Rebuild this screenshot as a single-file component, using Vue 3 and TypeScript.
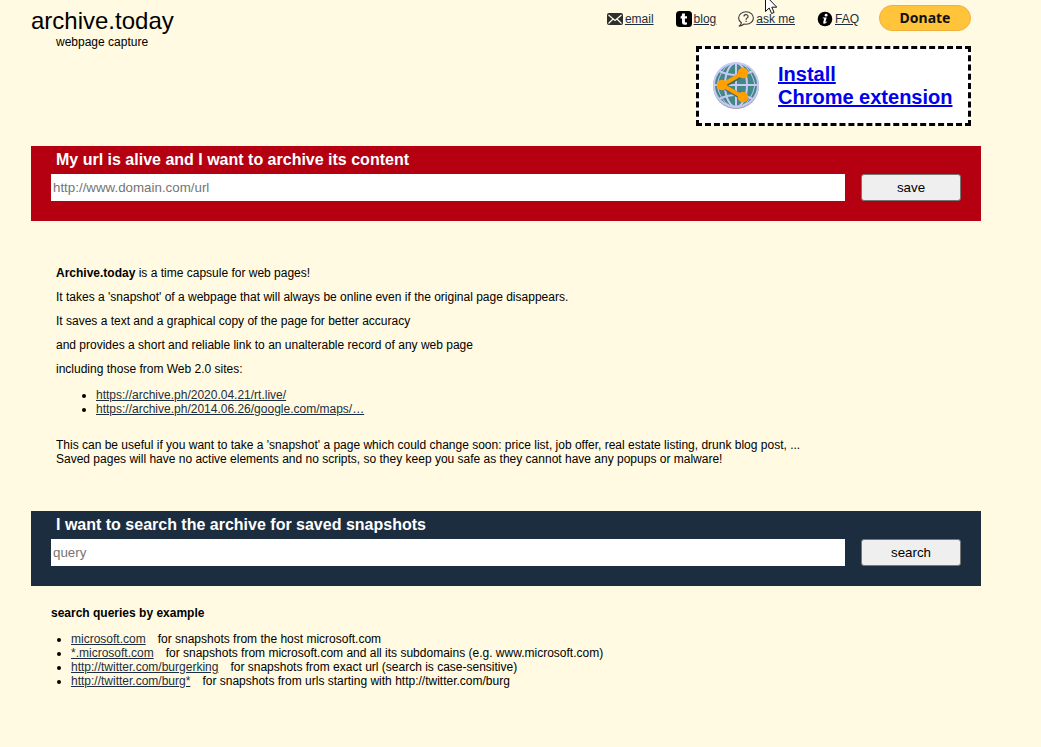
<script setup lang="ts">
import { ref } from 'vue'

interface QueryExample {
  query: string
  description: string
}

const url = ref('')
const query = ref('')

const samples: string[] = [
  'https://archive.ph/2020.04.21/rt.live/',
  'https://archive.ph/2014.06.26/google.com/maps/…',
]

const examples: QueryExample[] = [
  { query: 'microsoft.com', description: 'for snapshots from the host microsoft.com' },
  { query: '*.microsoft.com', description: 'for snapshots from microsoft.com and all its subdomains (e.g. www.microsoft.com)' },
  { query: 'http://twitter.com/burgerking', description: 'for snapshots from exact url (search is case-sensitive)' },
  { query: 'http://twitter.com/burg*', description: 'for snapshots from urls starting with http://twitter.com/burg' },
]
</script>

<template>
  <div class="page">
    <header class="header">
      <div class="brand">
        <h1 class="title">archive.today</h1>
        <div class="tagline">webpage capture</div>
      </div>
      <div class="side">
        <nav class="nav">
          <a class="nav-link" href="#email">
            <svg width="16" height="16" viewBox="0 0 16 16" aria-hidden="true">
              <rect y="2" width="16" height="12" rx="2" fill="#2e2e2e" />
              <path d="M1.5 4 L8 9.5 L14.5 4 M1.5 12.5 L5.8 8.3 M14.5 12.5 L10.2 8.3" fill="none" stroke="#fffae1" stroke-width="1.2" />
            </svg>
            <span class="nav-text">email</span>
          </a>
          <a class="nav-link" href="#blog">
            <svg width="16" height="16" viewBox="0 0 16 16" aria-hidden="true">
              <rect width="16" height="16" rx="3.5" fill="#000" />
              <path d="M6.2 2.4 H8.9 V5.2 H11 V7.4 H8.9 V10.4 Q8.9 11.5 9.9 11.5 Q10.5 11.5 11 11.2 V13.2 Q10.2 13.7 8.9 13.7 Q6 13.7 6 11.2 V7.4 H4.6 V5.6 Q6.1 5 6.2 2.4 Z" fill="#fff" />
            </svg>
            <span class="nav-text">blog</span>
          </a>
          <a class="nav-link" href="#ask">
            <svg width="16" height="16" viewBox="0 0 16 16" aria-hidden="true">
              <path d="M3.4 11.8 C1.2 10.3 .6 8.7 .6 7 C.6 3.5 3.8 .8 8.1 .8 C12.3 .8 15.4 3.5 15.4 7 C15.4 10.6 12.3 13.2 8.1 13.2 L6.1 13 C4.8 14.2 3.2 14.9 .9 15.2 C2.4 14.2 3.1 13.1 3.4 11.8 Z" fill="none" stroke="#3c3c3c" stroke-width="1.1" />
              <path d="M6 5.4 C6 3.2 10.1 3.1 10.1 5.4 C10.1 7 8.1 6.8 8.1 8.7 M8.1 9.7 V11" fill="none" stroke="#3c3c3c" stroke-width="1.2" />
            </svg>
            <span class="nav-text">ask me</span>
          </a>
          <a class="nav-link" href="#faq">
            <svg width="16" height="16" viewBox="0 0 16 16" aria-hidden="true">
              <circle cx="8" cy="8" r="7.3" fill="#000" />
              <circle cx="9.1" cy="4.2" r="1.4" fill="#fff" />
              <path d="M5.8 6.6 H9.7 L8.4 11.1 Q8.5 11.5 9.8 10.4 L10.2 10.8 Q8.5 13 6.9 12.8 Q5.9 12.6 6.3 11.1 L7.2 7.5 L5.7 7.2 Z" fill="#fff" />
            </svg>
            <span class="nav-text">FAQ</span>
          </a>
          <button class="donate" type="button">Donate</button>
        </nav>
        <a class="extension" href="#extension">
          <svg width="48" height="48" viewBox="0 1 48 48" aria-hidden="true">
            <circle cx="24" cy="25" r="23" fill="#999aa8" />
            <circle cx="24" cy="24" r="22" fill="#438887" stroke="#c6c9f4" stroke-width="2" />
            <g fill="none" stroke="#c6c9f4" stroke-width="2">
              <path d="M2 24 H46 M24 2 V46" />
              <ellipse cx="24" cy="24" rx="11" ry="22" />
              <path d="M7 10 Q24 18 41 10 M7 38 Q24 30 41 38" />
              <path d="M18 3 Q8 9 5 24 Q8 39 18 45 M30 3 Q40 9 43 24 Q40 39 30 45" stroke-width="1" />
            </g>
            <path d="M31 13 L11 25 L31 37" fill="none" stroke="#446966" stroke-width="5" />
            <path d="M31 12 L10 24 L31 36" fill="none" stroke="#ffa000" stroke-width="4" />
            <g fill="#ffa000">
              <circle cx="10" cy="24" r="5.3" />
              <circle cx="31" cy="12" r="5.3" />
              <circle cx="31" cy="36" r="5.3" />
            </g>
          </svg>
          <span class="extension-text">Install<br>Chrome extension</span>
        </a>
      </div>
    </header>

    <main>
      <form class="panel save-panel" @submit.prevent>
        <label class="panel-title" for="url">My url is alive and I want to archive its content</label>
        <div class="fields">
          <input id="url" v-model="url" class="text-box" type="text" placeholder="http://www.domain.com/url">
          <button class="submit" type="submit">save</button>
        </div>
      </form>

      <section class="about">
        <p><b>Archive.today</b> is a time capsule for web pages!</p>
        <p>It takes a 'snapshot' of a webpage that will always be online even if the original page disappears.</p>
        <p>It saves a text and a graphical copy of the page for better accuracy</p>
        <p>and provides a short and reliable link to an unalterable record of any web page</p>
        <p>including those from Web 2.0 sites:</p>
        <ul class="samples">
          <li v-for="sample in samples" :key="sample"><a :href="sample">{{ sample }}</a></li>
        </ul>
        <p>
          This can be useful if you want to take a 'snapshot' a page which could change soon: price list, job offer, real estate listing, drunk blog post, ...<br>
          Saved pages will have no active elements and no scripts, so they keep you safe as they cannot have any popups or malware!
        </p>
      </section>

      <form class="panel search-panel" @submit.prevent>
        <label class="panel-title" for="query">I want to search the archive for saved snapshots</label>
        <div class="fields">
          <input id="query" v-model="query" class="text-box" type="text" placeholder="query">
          <button class="submit" type="submit">search</button>
        </div>
      </form>

      <section class="help">
        <h2 class="help-title">search queries by example</h2>
        <ul class="examples">
          <li v-for="example in examples" :key="example.query">
            <a href="#search">{{ example.query }}</a><span class="description">{{ example.description }}</span>
          </li>
        </ul>
      </section>
    </main>

    <svg class="pointer" width="12" height="19" viewBox="0 0 12 19" aria-hidden="true">
      <path d="M.5 .5 V16.5 L4.2 13 L6.6 18.5 L9.1 17.4 L6.8 12.2 H11.8 Z" fill="#fff" stroke="#111" />
    </svg>
  </div>
</template>

<style>
body {
  margin: 0;
  background: #fffae1;
}
</style>

<style scoped>
.page {
  box-sizing: border-box;
  padding: 5px 60px 40px 31px;
  color: #000;
  font: 12px/14px "Liberation Sans", Arial, sans-serif;
}

a {
  color: #1d2d40;
}

.header {
  display: flex;
  justify-content: space-between;
  padding-right: 10px;
  margin-bottom: 20px;
}

.title {
  margin: 2px 0 0;
  font-size: 24px;
  font-weight: normal;
  line-height: 28px;
}

.tagline {
  padding-left: 25px;
}

.side {
  display: flex;
  flex-direction: column;
  align-items: flex-end;
  gap: 15px;
}

.nav {
  display: flex;
  align-items: center;
  gap: 22px;
}

.nav-link {
  display: flex;
  align-items: center;
  gap: 2px;
  padding-top: 2px;
  text-decoration: none;
}

.nav-text {
  text-decoration: underline;
}

.donate {
  width: 92px;
  height: 26px;
  padding: 0;
  margin-left: -2px;
  border: 1px solid #f0b040;
  border-radius: 13px;
  background: #ffc439;
  color: #111;
  font: bold 14px/20px "Noto Sans", "Open Sans", sans-serif;
}

.extension {
  box-sizing: border-box;
  display: flex;
  align-items: center;
  gap: 18px;
  width: 275px;
  height: 80px;
  padding: 0 13px;
  border: 3px dashed #000;
  background: #fff;
  color: #0000ee;
  font-size: 20px;
  font-weight: bold;
  line-height: 23px;
}

.panel {
  box-sizing: border-box;
  height: 75px;
  padding: 5px 20px 20px;
}

.save-panel {
  background: #b40010;
}

.search-panel {
  background: #1d2d40;
}

.panel-title {
  display: block;
  padding-left: 5px;
  margin-bottom: 5px;
  color: #fff;
  font-size: 16px;
  font-weight: bold;
  line-height: 18px;
}

.fields {
  display: flex;
  gap: 16px;
}

.text-box {
  box-sizing: border-box;
  flex: 1;
  min-width: 0;
  height: 27px;
  padding: 0 2px;
  border: 0;
  background: #fff;
  color: #000;
  font-family: "Liberation Sans", Arial, sans-serif;
}

.text-box::placeholder {
  color: #757575;
}

.submit {
  width: 100px;
  height: 27px;
  padding: 0;
  border: 1px solid #767676;
  border-radius: 3px;
  background: #efefef;
  color: #000;
  font-family: "Liberation Sans", Arial, sans-serif;
}

.about {
  padding: 45px 25px;
}

.about p {
  margin: 0 0 10px;
}

.about p:last-child {
  margin: 0;
}

.samples {
  margin: 12px 0 22px;
  padding-left: 40px;
}

.help {
  padding: 20px;
}

.help-title {
  margin: 0 0 12px;
  font-size: 12px;
  line-height: 14px;
}

.examples {
  margin: 0;
  padding-left: 20px;
}

.description {
  margin-left: 12px;
}

.pointer {
  position: absolute;
  top: -5px;
  left: 765px;
}
</style>
